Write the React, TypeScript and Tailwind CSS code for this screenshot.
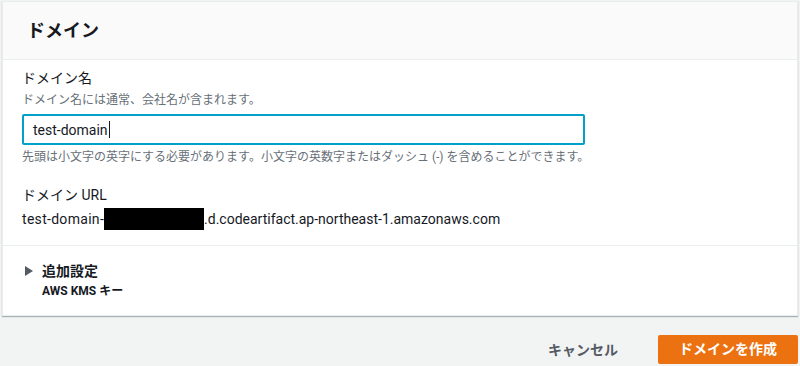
export default function App() {
  const font = { fontFamily: '"Roboto", "Noto Sans CJK JP", sans-serif' };
  return (
    <div className="h-[366px] w-[800px] overflow-hidden bg-[#f2f3f3] text-[#16191f]" style={font}>
      <div className="mx-[2px] mt-[1px] border border-[#eaeded] bg-white shadow-[0_1px_1px_0_rgba(0,28,36,0.3)]">
        {/* Header */}
        <div className="flex h-[58px] items-center border-b border-[#eaeded] bg-[#fafafa] pl-[24px]">
          <h2 className="text-[18px] font-bold leading-[22px]">ドメイン</h2>
        </div>

        {/* Body */}
        <div className="border-b border-[#eaeded] px-[19px] pb-[15px] pt-[8px]">
          <p className="text-[14px] leading-[20px]">ドメイン名</p>
          <p className="mt-[4px] text-[12px] leading-[16px] text-[#687078]">ドメイン名には通常、会社名が含まれます。</p>
          <div className="mt-[6px] flex h-[31px] w-[563px] items-center rounded-[2px] border-2 border-[#00a1c9] pl-[9px]">
            <span className="text-[14px] leading-[20px]">test-domain</span>
            <span className="ml-px h-[17px] w-px bg-[#16191f]" />
          </div>
          <p className="mt-[4px] text-[12px] leading-[16px] text-[#687078]">
            先頭は小文字の英字にする必要があります。小文字の英数字またはダッシュ (-) を含めることができます。
          </p>
          <p className="mt-[20px] text-[14px] leading-[20px]">ドメイン URL</p>
          <div className="mt-[3px] flex items-center text-[14px] leading-[22px]">
            <span className="tracking-[0.3px]">test-domain-</span>
            <span className="h-[22px] w-[100px] bg-black" />
            <span>.d.codeartifact.ap-northeast-1.amazonaws.com</span>
          </div>
        </div>

        {/* Additional settings */}
        <div className="px-[19px] pb-[16px] pt-[15px]">
          <div className="flex items-center">
            <svg width="10" height="10" viewBox="0 0 10 10" className="ml-[2px] mr-[8px]">
              <path d="M1 0 L9 5 L1 10 Z" fill="#545b64" />
            </svg>
            <span className="text-[14px] font-bold leading-[20px] text-[#16191f]">追加設定</span>
          </div>
          <p className="mt-[2px] pl-[20px] text-[12px] font-bold leading-[16px] text-[#16191f]">AWS KMS キー</p>
        </div>
      </div>

      {/* Footer */}
      <div className="mr-[2px] mt-[19px] flex items-center justify-end">
        <button className="mr-[40px] text-[14px] font-bold leading-[20px] text-[#545b64]">キャンセル</button>
        <button className="h-[29px] w-[140px] rounded-[2px] bg-[#ec7211] text-[14px] font-bold text-white">
          ドメインを作成
        </button>
      </div>
    </div>
  );
}
